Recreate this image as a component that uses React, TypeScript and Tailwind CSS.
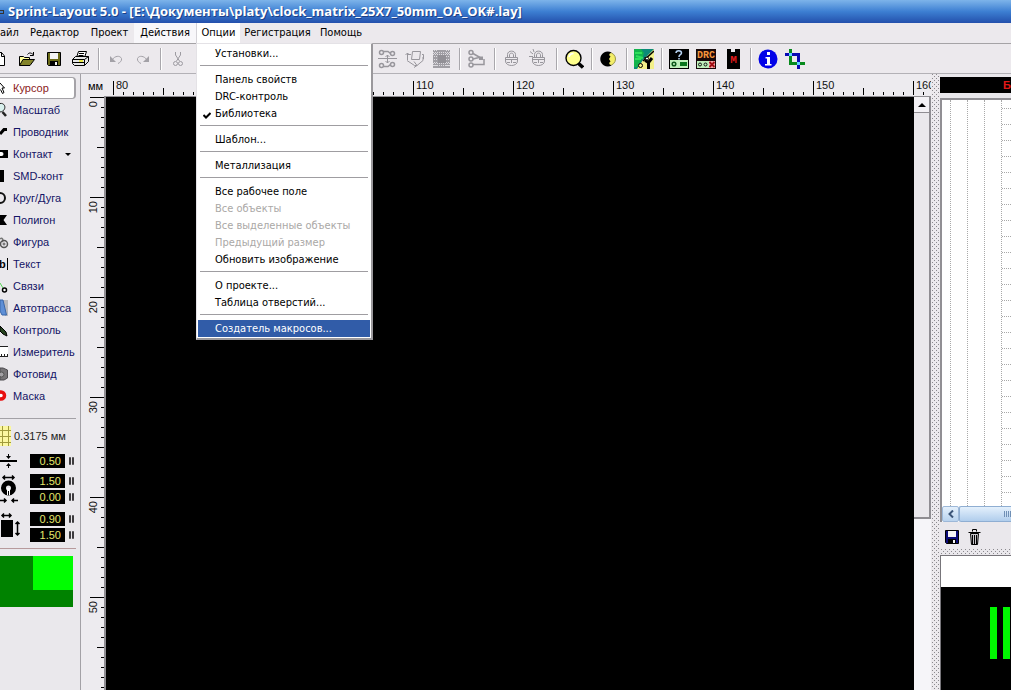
import { useEffect, useState } from "react";
import type { ReactNode } from "react";
import clsx from "clsx";

const UI_FONT = "font-['DejaVu_Sans_Condensed','DejaVu_Sans',sans-serif]";

/* ---------- Toolbar icons, all on a 20x20 grid ---------- */

function Icon({ children, w = 20 }: { children: ReactNode; w?: number }) {
  return (
    <svg width={w} height={20} viewBox={`0 0 ${w} 20`} fill="none" className="shrink-0" aria-hidden="true">
      {children}
    </svg>
  );
}

const NewIcon = () => (
  <Icon w={6}>
    <path d="M0 3.5H1.5L4.5 7V16.5H0" fill="#fff" stroke="#000" />
    <path d="M1.5 3.5V7.5H4.5" stroke="#000" />
  </Icon>
);

const OpenIcon = () => (
  <Icon>
    <path d="M2.5 16.5V7.5H6.5L7.5 8.5H12.5V10.5" fill="#ffff9c" stroke="#000" />
    <path d="M2.5 16.5L6 10.5H17.5L13 16.5Z" fill="#84842a" stroke="#000" />
    <path d="M10.5 5.5C12 3.5 14 3.5 16 5.5M16.5 3V6.5H13" stroke="#000" />
  </Icon>
);

const SaveIcon = ({ body = "#6b6b18" }: { body?: string }) => (
  <Icon>
    <path d="M3.5 3.5H16.5V16.5H4.5L3.5 15.5Z" fill={body} stroke="#000" />
    <rect x="6" y="4" width="8" height="6" fill="#f4f4f4" />
    <rect x="6" y="12" width="8" height="5" fill="#000" />
    <rect x="11" y="13" width="2" height="3" fill="#f4f4f4" />
  </Icon>
);

const PrintIcon = () => (
  <Icon>
    <path d="M5.5 8.5L7.5 2.5H15.5L13.5 8.5" fill="#fff" stroke="#000" />
    <path d="M8 4.5H13M7.5 6.5H12.5" stroke="#000" />
    <path d="M1.5 10.5L4.5 7.5H17.5V12.5L13.5 16.5H3.5L1.5 14.5Z" fill="#e6e6e6" stroke="#000" />
    <path d="M1.5 10.5H13.5L17.5 7.5M13.5 10.5V16.5M2 13.5H13" stroke="#000" />
    <rect x="8" y="11" width="4" height="2" fill="#e8e84a" />
  </Icon>
);

const UndoIcon = ({ flip }: { flip?: boolean }) => (
  <Icon>
    <g transform={flip ? "matrix(-1 0 0 1 20 0)" : undefined} stroke="#a3a1a7">
      <path d="M4 7V13H10Z" fill="#a3a1a7" stroke="none" />
      <path d="M6.5 10.5C8.5 7 14 6 15.5 9.5C16 12 14 13.5 12 14.5" />
    </g>
  </Icon>
);

const CutIcon = () => (
  <Icon>
    <g stroke="#9d9ba1">
      <path d="M7.5 3V6L11.5 12M12.5 3V6L8.5 12" />
      <circle cx="7.5" cy="14.5" r="2" />
      <circle cx="12.5" cy="14.5" r="2" />
    </g>
  </Icon>
);

const DistributeIcon = () => (
  <Icon>
    <g stroke="#98969c">
      <g strokeWidth="1.5">
        <circle cx="3.5" cy="3.5" r="2" />
        <circle cx="3.5" cy="16.5" r="2" />
        <circle cx="14.5" cy="4.5" r="2" />
        <circle cx="14.5" cy="15.5" r="2" />
        <path d="M5.5 2.5H10L12.5 4.5M5.5 17.5H10L12.5 15.5" />
      </g>
      <path d="M0 9.5H19M9.5 6V14M7.5 8L9.5 6L11.5 8M7.5 12L9.5 14L11.5 12" />
    </g>
  </Icon>
);

const FlipBoardIcon = () => (
  <Icon>
    <g stroke="#98969c">
      <path d="M7.5 2.5H15.5L14.5 10.5H6.5ZM2.5 11V4M0.5 6L2.5 4L4.5 6M3 5.5H6M17 5.5H18.5V10" />
      <path d="M2 11.5L9.500 16.5H12L18 11.5V8M9 12.5L12 16.500L9 18.5" />
    </g>
  </Icon>
);

const MeshIcon = () => (
  <Icon>
    <rect x="1" y="1" width="17" height="18" fill="#a09ea4" />
    <path d="M1 3.5H18M1 5.5H18M1 14.5H18M1 16.5H18" stroke="#dddbe0" strokeDasharray="1 1" />
    <path d="M2.5 1V19M4.5 1V19M14.5 1V19M16.5 1V19" stroke="#dddbe0" strokeDasharray="1 2" />
    <rect x="6" y="6" width="8" height="8" fill="#929096" />
  </Icon>
);

const NodesIcon = () => (
  <Icon>
    <g stroke="#98969c" strokeWidth="1.5">
      <circle cx="4" cy="3.5" r="2" />
      <circle cx="4" cy="10" r="2" />
      <circle cx="4" cy="16" r="2" />
      <path d="M6 4.500L13 8.500M6 10L12 8.500M6 15.500H17V10" />
      <path d="M12 7.500H16V11H12Z" fill="#98969c" stroke="none" />
    </g>
  </Icon>
);

const LockIcon = ({ open }: { open?: boolean }) => (
  <Icon>
    <g stroke="#98969c">
      <path d="M5.5 8V5.5C5.5 1 13.5 1 13.5 5.5V8M7.5 8V6C7.5 3.5 11.5 3.5 11.5 6V8" />
      <path d="M3.5 8.5H15.5V12C15.5 18 3.5 18 3.5 12ZM3.5 10.5H16M5 13.5H8M11 13.5H14M9.5 10V14" />
      {open && <path d="M1 2.5L4 5M0 7.5H4M4 0L5 3" />}
    </g>
  </Icon>
);

const ZoomIcon = () => (
  <Icon>
    <path d="M14 14L19 18.5" stroke="#000" strokeWidth="3.500" />
    <circle cx="9.5" cy="9" r="7.5" fill="#ffff8c" stroke="#000" strokeWidth="1.400" />
    <path d="M5 8C5.500 5.500 7.500 4.500 9.500 4.500" stroke="#fff" strokeWidth="1.500" />
  </Icon>
);

const ContrastIcon = () => (
  <Icon>
    <circle cx="10" cy="10" r="6.500" fill="#f4ee6a" stroke="#99964a" />
    <path
      d="M12.500 3.500A7.500 7.500 0 1 0 12.500 16.500C10 15.500 9.500 13.500 11.500 12.500L10 10L11.500 7.500C9.500 6.500 10 4.500 12.500 3.500Z"
      fill="#000"
    />
  </Icon>
);

const BoardToolIcon = () => (
  <Icon>
    <rect width="20" height="20" fill="#f3f08a" />
    <path d="M0 0H20L9 11L3 20H0Z" fill="#0b8a78" />
    <path d="M0 0H7L10 4L8 10L3 18H0Z" fill="#12b34c" />
    <path d="M1 4H8M1 10H7M2 7L9 9" stroke="#2fe05c" strokeWidth="2" />
    <path d="M9 12L20 2" stroke="#000" strokeWidth="1.500" />
    <circle cx="6.500" cy="16.500" r="2" stroke="#000" fill="#f3f08a" />
    <path d="M14.500 20V13M12 8V12L14.500 13.500L18 9" stroke="#000" strokeWidth="3" />
    <circle cx="13" cy="9.500" r="1.500" fill="#fff" stroke="#000" />
  </Icon>
);

const HelpChipIcon = () => (
  <Icon>
    <rect width="20" height="20" fill="#000" />
    <rect x="1" y="11" width="18" height="8" fill="#bff0bb" />
    <path d="M7 4C7 1 12.500 1 12.500 4C12.500 6 10 5.500 10 8M10 9V10.500" stroke="#b8d4f4" strokeWidth="1.500" />
    <circle cx="5" cy="15" r="1.800" stroke="#0c571b" strokeWidth="1.500" />
    <rect x="11" y="13" width="7" height="4" fill="#08751c" />
  </Icon>
);

const DrcIcon = () => (
  <Icon>
    <rect width="20" height="20" fill="#16090a" />
    <rect x="1" y="12" width="18" height="7" fill="#bff0bb" />
    <text x="10" y="9" fontSize="10" textAnchor="middle" fill="#f5963c" className="font-['Liberation_Mono',monospace] font-bold">
      DRC
    </text>
    <circle cx="4" cy="15.500" r="1.500" stroke="#111" />
    <circle cx="9.500" cy="15.500" r="1.500" stroke="#111" />
    <rect x="13" y="12" width="6" height="7" fill="#f2a7a7" />
    <path d="M13.500 13L18.500 18M18.500 13L13.500 18" stroke="#a00c12" strokeWidth="1.800" />
  </Icon>
);

const MacroIcon = () => (
  <Icon>
    <path d="M4 0H8V3H12V0H17V20H4Z" fill="#000" />
    <text x="10.500" y="14" fontSize="11" textAnchor="middle" fill="#e01b1b" className="font-['Liberation_Mono',monospace] font-bold">
      M
    </text>
  </Icon>
);

const InfoIcon = () => (
  <Icon>
    <circle cx="10" cy="10" r="9.500" fill="#0202e8" />
    <path d="M9 3H12V6H9ZM7.500 8H12V15H13.500V16.500H7V15H9V9.500H7.500Z" fill="#fff" />
  </Icon>
);

const CropIcon = () => (
  <Icon>
    <path d="M5.500 0V14.500H20" stroke="#078a1c" strokeWidth="3" />
    <path d="M0 5.500H13.500V20" stroke="#0a0ab4" strokeWidth="3" />
    <rect x="4" y="4" width="3" height="3" fill="#5fd3ff" />
    <rect x="12" y="13" width="3" height="3" fill="#5fd3ff" />
  </Icon>
);

type ToolbarEntry = "sep" | "gap" | { label: string; icon: ReactNode; first?: boolean };

const toolbar: ToolbarEntry[] = [
  { label: "Новый", icon: <NewIcon />, first: true },
  { label: "Открыть", icon: <OpenIcon /> },
  { label: "Сохранить", icon: <SaveIcon /> },
  { label: "Печать", icon: <PrintIcon /> },
  "sep",
  { label: "Отменить", icon: <UndoIcon /> },
  { label: "Вернуть", icon: <UndoIcon flip /> },
  "sep",
  { label: "Вырезать", icon: <CutIcon /> },
  "gap",
  { label: "Распределить", icon: <DistributeIcon /> },
  { label: "Перевернуть", icon: <FlipBoardIcon /> },
  { label: "Сетка", icon: <MeshIcon /> },
  "sep",
  { label: "Узлы", icon: <NodesIcon /> },
  "sep",
  { label: "Закрепить", icon: <LockIcon /> },
  { label: "Освободить", icon: <LockIcon open /> },
  "sep",
  { label: "Лупа", icon: <ZoomIcon /> },
  "sep",
  { label: "Контраст", icon: <ContrastIcon /> },
  "sep",
  { label: "Фото платы", icon: <BoardToolIcon /> },
  "sep",
  { label: "Панель свойств", icon: <HelpChipIcon /> },
  { label: "DRC", icon: <DrcIcon /> },
  { label: "Макросы", icon: <MacroIcon /> },
  "sep",
  { label: "Информация", icon: <InfoIcon /> },
  { label: "Обрезка", icon: <CropIcon /> },
];

function Toolbar() {
  return (
    <div className="flex h-[31px] shrink-0 items-center overflow-hidden border-y border-t-[#a5a3a6] border-b-[#b3b1b6] bg-[#ece9ed]">
      {toolbar.map((t, i) => {
        if (t === "gap") return <span key={i} className="w-[183px] shrink-0" />;
        if (t === "sep")
          return (
            <span key={i} className="flex w-2 shrink-0 pl-[3px]">
              <span className="h-[22px] w-0.5 border-l border-[#a9a7ac] bg-white" />
            </span>
          );
        return (
          <button
            key={i}
            aria-label={t.label}
            className={clsx("flex h-7 shrink-0 items-center", t.first ? "w-3.5" : "w-[27px] justify-start pl-[3px]")}
          >
            {t.icon}
          </button>
        );
      })}
    </div>
  );
}

/* ---------- Menu bar ---------- */

const optionGroups: { text: string; checked?: boolean; disabled?: boolean; active?: boolean }[][] = [
  [{ text: "Установки..." }],
  [{ text: "Панель свойств" }, { text: "DRC-контроль" }, { text: "Библиотека", checked: true }],
  [{ text: "Шаблон..." }],
  [{ text: "Металлизация" }],
  [
    { text: "Все рабочее поле" },
    { text: "Все объекты", disabled: true },
    { text: "Все выделенные объекты", disabled: true },
    { text: "Предыдущий размер", disabled: true },
    { text: "Обновить изображение" },
  ],
  [{ text: "О проекте..." }, { text: "Таблица отверстий..." }],
  [{ text: "Создатель макросов...", active: true }],
];

function OptionsMenu() {
  return (
    <div className="absolute top-full left-0 z-10 w-[177px] border border-r-2 border-b-2 border-[#e4e2e6] border-r-[#9a989c] border-b-[#9a989c] bg-white p-px">
      {optionGroups.map((group, i) => (
        <div
          key={i}
          className={clsx(i > 0 && "before:mx-0.5 before:mt-[3px] before:mb-[5px] before:block before:h-px before:bg-[#9f9da1]")}
        >
          {group.map((item) => (
            <button
              key={item.text}
              disabled={item.disabled}
              className={clsx(
                "flex h-[17px] w-full items-center pt-0.5 whitespace-nowrap",
                item.active ? "bg-[#315ca8] text-white" : item.disabled ? "text-[#aaa8a6]" : "text-black"
              )}
            >
              <span className="flex w-[17px] justify-center">
                {item.checked && (
                  <svg width="8" height="8" viewBox="0 0 8 8" aria-hidden="true">
                    <path d="M0.5 4L3 6.5L7.5 2" fill="none" stroke="#000" strokeWidth="2" />
                  </svg>
                )}
              </span>
              {item.text}
            </button>
          ))}
        </div>
      ))}
    </div>
  );
}

function MenuBar() {
  const item = "flex h-full items-center justify-center";
  return (
    <nav className="flex h-5 shrink-0 bg-[#ece9ed] text-[11px]">
      <button className="flex h-full w-6 items-center">айл</button>
      <button className={clsx(item, "w-[61px]")}>Редактор</button>
      <button className={clsx(item, "w-[49px]")}>Проект</button>
      <button className={clsx(item, "w-[62px] bg-[#f8f7fa]")}>Действия</button>
      <div className="relative">
        <button className={clsx(item, "w-11 border-l border-[#d5d3d8] bg-white")}>Опции</button>
        <OptionsMenu />
      </div>
      <button className={clsx(item, "w-[75px]")}>Регистрация</button>
      <button className={clsx(item, "w-[52px]")}>Помощь</button>
    </nav>
  );
}

/* ---------- Left tool panel ---------- */

function ToolGlyph({ children }: { children: ReactNode }) {
  return (
    <svg width="10" height="20" viewBox="0 0 10 20" fill="none" className="shrink-0" aria-hidden="true">
      {children}
    </svg>
  );
}

const tools: { label: string; glyph: ReactNode; menu?: boolean }[] = [
  { label: "Курсор", glyph: <path d="M0 5L4.500 10H2L4 14.500L2.500 15.500L0.500 11.500" fill="#fff" stroke="#000" /> },
  {
    label: "Масштаб",
    glyph: (
      <>
        <path d="M0 3.500C6 2.500 7 11 0 12" fill="#d9f1ee" stroke="#222" />
        <path d="M2.500 12L6 16" stroke="#222" strokeWidth="2.500" />
      </>
    ),
  },
  { label: "Проводник", glyph: <path d="M0 12L4 7.500H7" stroke="#000" strokeWidth="3" /> },
  {
    label: "Контакт",
    menu: true,
    glyph: (
      <>
        <rect y="6" width="8" height="8" fill="#000" />
        <path d="M0 8H1.500A2 2 0 0 1 1.500 12H0Z" fill="#fff" />
      </>
    ),
  },
  { label: "SMD-конт", glyph: <rect y="4" width="4" height="12" fill="#000" /> },
  { label: "Круг/Дуга", glyph: <circle cx="0" cy="10" r="5" stroke="#111" strokeWidth="2" /> },
  { label: "Полигон", glyph: <path d="M0 5H7L3.500 10L7 15H0Z" fill="#000" /> },
  {
    label: "Фигура",
    glyph: (
      <>
        <path d="M0 7C2 5 4 8 2 10" stroke="#777" strokeWidth="1.500" />
        <circle cx="4" cy="12" r="3.500" stroke="#555" strokeWidth="1.500" />
        <circle cx="4" cy="12" r="1" stroke="#555" />
      </>
    ),
  },
  {
    label: "Текст",
    glyph: (
      <>
        <text x="-1" y="14" fontSize="11" fill="#000" className="font-['Liberation_Sans',sans-serif] font-bold">
          b
        </text>
        <path d="M7.500 4V16" stroke="#000" />
      </>
    ),
  },
  {
    label: "Связи",
    glyph: (
      <>
        <path d="M0 7L3 12" stroke="#58d858" />
        <circle cx="4.500" cy="14" r="2" fill="#fff" stroke="#000" strokeWidth="1.500" />
      </>
    ),
  },
  {
    label: "Автотрасса",
    glyph: (
      <>
        <path d="M3 2H8V18H5Z" fill="#b9b9bd" />
        <path d="M0 2H3L6.500 17H2L0 13Z" fill="#5e8fd6" stroke="#3966a8" />
      </>
    ),
  },
  { label: "Контроль", glyph: <path d="M0 6L6 12L7 16L3 14L0 11Z" fill="#26441f" stroke="#000" /> },
  {
    label: "Измеритель",
    glyph: (
      <>
        <rect x="-1" y="4.500" width="9" height="10" fill="#fff" />
        <path d="M0 4.500H8M0 14.500H8" stroke="#222" />
        <path d="M1.500 12V14M4.500 12V14M7.500 12V14" stroke="#222" />
      </>
    ),
  },
  {
    label: "Фотовид",
    glyph: (
      <>
        <path d="M0 4H3L7.500 6V14L4 16H0Z" fill="#777578" stroke="#4e4c50" />
        <circle cx="1.500" cy="10.500" r="2.500" fill="#a3a1a5" stroke="#555" />
      </>
    ),
  },
  { label: "Маска", glyph: <circle cx="1" cy="9.500" r="3.500" fill="#fff" stroke="#e80f0f" strokeWidth="3.500" /> },
];

function Field({ label, value }: { label: string; value: string }) {
  return (
    <div className="flex h-3.5 items-center">
      <input
        aria-label={label}
        defaultValue={value}
        className="h-3.5 w-[35px] bg-black pr-1 text-right text-[11px] text-[#e6e86a] outline-none"
      />
      <span className="ml-1 flex gap-px">
        <span className="h-2 w-0.5 rounded bg-[#3d3b3e]" />
        <span className="h-2 w-0.5 rounded bg-[#3d3b3e]" />
      </span>
    </div>
  );
}

function Sidebar() {
  return (
    <aside className="flex w-[81px] shrink-0 flex-col overflow-hidden border-r border-[#a3a1a6] bg-[#eae8ec] pt-[3px] font-['Liberation_Sans',Arial,sans-serif] text-[11px]">
      {tools.map((t, i) => (
        <button
          key={t.label}
          className={clsx(
            "flex h-[22px] shrink-0 items-center text-left whitespace-nowrap",
            i === 0
              ? "mr-1 rounded-r-sm border border-l-0 border-r-2 border-[#a5a3a8] bg-white text-[#8b1a1a]"
              : "text-[#141466]"
          )}
        >
          <ToolGlyph>{t.glyph}</ToolGlyph>
          <span className="ml-[3px]">{t.label}</span>
          {t.menu && <span className="ml-3 border-x-3 border-t-3 border-x-transparent border-t-black" />}
        </button>
      ))}

      <div className="mt-[11px] mr-1 border-t border-[#a3a1a6]" />

      <button className="mt-[7px] flex h-5 shrink-0 items-center gap-[3px] whitespace-nowrap text-[#222]">
        <svg width="11" height="20" viewBox="0 0 11 20" className="shrink-0" aria-hidden="true">
          <rect width="11" height="20" fill="#fbf7a0" />
          <path d="M0 4.500H11M0 10.500H11M0 16.500H11M2.500 0V20M8.500 0V20" stroke="#a09a3c" />
        </svg>
        0.3175 мм
      </button>

      <div className="mt-2 flex items-start">
        <svg width="30" height="90" viewBox="0 0 30 90" fill="none" stroke="#000" className="shrink-0" aria-hidden="true">
          <path d="M0 7H17" strokeWidth="2" />
          <path d="M8.500 0V3M8.500 11V14" />
          <path d="M6 2H11L8.500 5ZM6 12H11L8.500 9Z" fill="#000" stroke="none" />
          <path d="M3 23.500H14M5 21.500L3 23.500L5 25.500M12 21.500L14 23.500L12 25.500" strokeWidth="1.500" />
          <circle cx="8.500" cy="34" r="5" strokeWidth="5" />
          <path d="M8.500 34V41" stroke="#fff" strokeWidth="3" />
          <path d="M8.500 37V41" strokeWidth="1" />
          <path d="M0 46.500H6M4 44.500L6 46.500L4 48.500M18 46.500H12M14 44.500L12 46.500L14 48.500" strokeWidth="1.500" />
          <path d="M2 61.500H11M4 59.500L2 61.500L4 63.500M9 59.500L11 61.500L9 63.500" strokeWidth="1.500" />
          <rect x="1" y="66" width="12" height="17" fill="#000" stroke="none" />
          <path d="M17.500 68V81M15.500 70L17.500 68L19.500 70M15.500 79L17.500 81L19.500 79" strokeWidth="1.500" />
        </svg>
        <div className="flex flex-col">
          <Field label="Ширина дорожки" value="0.50" />
          <div className="mt-1.5 flex flex-col gap-0.5">
            <Field label="Диаметр контакта" value="1.50" />
            <Field label="Отверстие" value="0.00" />
          </div>
          <div className="mt-2 flex flex-col gap-0.5">
            <Field label="Ширина SMD" value="0.90" />
            <Field label="Высота SMD" value="1.50" />
          </div>
        </div>
      </div>

      <div className="mt-1 mr-1 border-t border-[#b79a9c]" />

      <div className="mt-[7px] mr-[7px] flex h-[51px] shrink-0 justify-end bg-[#008200]">
        <div className="h-[34px] w-10 bg-[#00fd00]" />
      </div>
    </aside>
  );
}

/* ---------- Work area ---------- */

const PX_PER_MM = 10;

const tickLength = (n: number) => (n % 10 === 0 ? 14 : n % 5 === 0 ? 7 : 3);

function useWindowSize() {
  const [size, setSize] = useState({ width: window.innerWidth, height: window.innerHeight });

  useEffect(() => {
    const onResize = () => setSize({ width: window.innerWidth, height: window.innerHeight });
    window.addEventListener("resize", onResize);
    return () => window.removeEventListener("resize", onResize);
  }, []);

  return size;
}

// 184px of the window's width and 97px of its height are taken by the panels around the sheet
function TopRuler({ length }: { length: number }) {
  const marks = Array.from({ length: Math.ceil((length - 184) / PX_PER_MM) }, (_, i) => i);
  return (
    <svg width="100%" height="22" className="block" aria-hidden="true">
      {marks.map((n) => {
        const x = 9 + n * PX_PER_MM;
        return (
          <g key={n}>
            <rect x={x} y={21 - tickLength(n)} width="1" height={tickLength(n)} fill="#000" />
            {n % 10 === 0 && (
              <text x={x + 3} y="15" fontSize="11" fill="#111">
                {80 + n}
              </text>
            )}
          </g>
        );
      })}
    </svg>
  );
}

function LeftRuler({ length }: { length: number }) {
  const marks = Array.from({ length: Math.ceil((length - 97) / PX_PER_MM) }, (_, i) => i);
  return (
    <svg width="23" height="100%" className="block" aria-hidden="true">
      {marks.map((n) => {
        const y = 1 + n * PX_PER_MM;
        return (
          <g key={n}>
            <rect x={23 - tickLength(n)} y={y} width={tickLength(n)} height="1" fill="#000" />
            {n % 10 === 0 && (
              <text transform={`translate(16 ${y + 4}) rotate(-90)`} textAnchor="end" fontSize="11" fill="#111">
                {n}
              </text>
            )}
          </g>
        );
      })}
    </svg>
  );
}

function WorkArea() {
  const { width, height } = useWindowSize();
  return (
    <main className="flex min-w-0 flex-1 flex-col bg-[#edebef] font-['Liberation_Sans',Arial,sans-serif]">
      <div className="flex h-[22px] shrink-0">
        <div className="flex w-[23px] shrink-0 items-center justify-end pt-0.5 pr-px text-[11px]">мм</div>
        <div className="min-w-0 flex-1 overflow-hidden">
          <TopRuler length={width} />
        </div>
      </div>
      <div className="flex min-h-0 flex-1">
        <div className="w-[23px] shrink-0 overflow-hidden">
          <LeftRuler length={height} />
        </div>
        <div className="min-w-0 flex-1 border-t border-l-2 border-[#8f8d92] bg-black" />
        <div className="flex w-[17px] shrink-0 flex-col border-t border-[#8f8d92] bg-[#f6f5f9]">
          <button
            aria-label="Вверх"
            className="flex h-4 shrink-0 items-center justify-center border-r-2 border-b border-[#8f8d92] bg-[#f3f1f5]"
          >
            <span className="border-x-4 border-b-4 border-x-transparent border-b-black" />
          </button>
          <div className="h-[406px] border-r-2 border-b-2 border-[#8f8d92] bg-[#eae8ec]" />
        </div>
      </div>
    </main>
  );
}

/* ---------- Library ---------- */

const DOTS =
  "bg-[conic-gradient(at_1px_1px,transparent_75%,#8b898e_0),conic-gradient(at_1px_1px,transparent_75%,#8b898e_0)] bg-[size:4px_4px] bg-[position:1px_0,3px_2px]";

function Library() {
  const treeRows = Array.from({ length: 25 }, (_, i) => i);
  return (
    <aside className="flex w-[71px] shrink-0 flex-col overflow-hidden bg-[#eae8ec] pt-[3px]">
      <div className="flex h-4 shrink-0 items-center justify-end bg-black font-['Liberation_Sans',Arial,sans-serif] text-[11px] font-bold text-[#e01818]">
        Б
      </div>

      <div className="mt-[5px] flex h-[424px] shrink-0 flex-col border-t-2 border-l-2 border-[#918f94] bg-white">
        <div className="flex min-h-0 flex-1 overflow-hidden pl-2">
          {[0, 1, 2].map((n) => (
            <div key={n} className="w-[17px] shrink-0 border-l border-dotted border-[#a9a9a9]" />
          ))}
          <div className="flex-1 border-l border-dotted border-[#a9a9a9] pt-2">
            {treeRows.map((n) => (
              <div key={n} className="h-4 border-t border-dotted border-[#a9a9a9]" />
            ))}
          </div>
        </div>
        <div className="flex h-4 shrink-0">
          <button
            aria-label="Влево"
            className="flex w-[17px] items-center justify-center rounded-xs border border-[#9db8d8] bg-linear-to-b from-[#e4f0fc] to-[#b9d3ee]"
          >
            <svg width="6" height="8" viewBox="0 0 6 8" aria-hidden="true">
              <path d="M5 0.500L1.500 4L5 7.500" fill="none" stroke="#3c5578" strokeWidth="2" />
            </svg>
          </button>
          <div className="flex flex-1 items-center justify-end gap-px overflow-hidden rounded-l-xs border border-r-0 border-[#8faed2] bg-linear-to-b from-[#e4f0fc] to-[#b0cdec]">
            {[0, 1, 2, 3].map((n) => (
              <span key={n} className="h-1.5 w-px bg-[#6f8fb5]" />
            ))}
          </div>
        </div>
      </div>

      <div className="flex h-[27px] shrink-0 items-center gap-0.5 pt-0.5 pl-0.5">
        <button aria-label="Сохранить макрос">
          <SaveIcon body="#0b0b78" />
        </button>
        <button aria-label="Удалить макрос">
          <Icon w={22}>
            <path d="M6.500 6.500H14.500L13.500 17.500H7.500Z" fill="#c9c7cc" stroke="#000" />
            <path d="M4.500 5.500H16.500M8.500 4.500V2.500H12.500V4.500M8.500 8V17M10.500 8V17M12.500 8V17" stroke="#000" />
          </Icon>
        </button>
      </div>

      <div className={clsx("h-[6px] shrink-0", DOTS)} />

      <div className="h-8 shrink-0 border-t border-l border-[#77757a] bg-white" />
      <div className="flex flex-1 justify-end gap-1.5 border-l border-[#77757a] bg-black pt-5 pr-px">
        <div className="h-[52px] w-[7px] bg-[#00f800]" />
        <div className="h-[52px] w-[7px] bg-[#00f800]" />
      </div>
    </aside>
  );
}

export default function App() {
  return (
    <div className={clsx("flex h-screen flex-col overflow-hidden bg-[#ece9ed] text-black", UI_FONT)}>
      <header className="flex h-[23px] shrink-0 items-center bg-linear-to-b from-[#7db4ea] via-[#3d7fd2] to-[#2450ac] whitespace-nowrap text-white">
        <span className="h-1 w-1 border border-l-0 border-[#333]" />
        <h1 className="ml-1 font-['Open_Sans',sans-serif] text-[13px] font-bold [text-shadow:1px_1px_#1c3f86]">
          Sprint-Layout 5.0 - [E:\Документы\platy\clock_matrix_25X7_50mm_OA_OK#.lay]
        </h1>
      </header>
      <MenuBar />
      <Toolbar />
      <div className="flex min-h-0 flex-1">
        <Sidebar />
        <WorkArea />
        <div className={clsx("w-[9px] shrink-0", DOTS)} />
        <Library />
      </div>
    </div>
  );
}
